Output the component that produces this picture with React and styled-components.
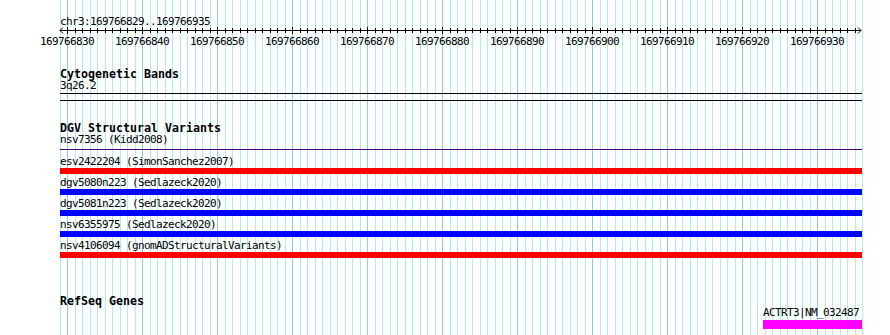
import styled, { createGlobalStyle } from "styled-components";

const START = 169766829;
const BP = 7.5;
const LEFT = 60;
const SPAN = 107;
const MONO = '"DejaVu Sans Mono", "Liberation Mono", monospace';

const GlobalStyle = createGlobalStyle`
  html, body {
    margin: 0;
    padding: 0;
    background: #ffffff;
  }
`;

const Panel = styled.div`
  position: relative;
  width: 890px;
  height: 335px;
  overflow: hidden;
  background: #ffffff;
  color: #000000;
  font-family: ${MONO};
`;

const GridLayer = styled.svg`
  position: absolute;
  left: 0;
  top: 0;
  z-index: 0;
`;

const Tracks = styled.div`
  position: relative;
  z-index: 1;
  display: flex;
  flex-direction: column;
  width: 802px;
  margin-left: ${LEFT}px;
  padding-top: 16px;
`;

const Caption = styled.div`
  font-size: 11px;
  letter-spacing: -0.62px;
  line-height: 12px;
  height: 12px;
  white-space: pre;
  margin-top: ${(p) => p.$top || 0}px;
  margin-left: ${(p) => p.$left || 0}px;
`;

const TrackTitle = styled.div`
  font-size: 11.63px;
  font-weight: bold;
  line-height: 12px;
  height: 12px;
  white-space: pre;
  margin-top: ${(p) => p.$top || 0}px;
`;

const Rule = styled.div`
  height: 1px;
  width: 802px;
  background: ${(p) => p.$color || "#000000"};
  margin-top: ${(p) => p.$top || 0}px;
`;

const Bar = styled.div`
  height: ${(p) => p.$height || 6}px;
  width: ${(p) => p.$width || 802}px;
  margin-top: ${(p) => p.$top || 0}px;
  margin-left: ${(p) => p.$left || 0}px;
  background: ${(p) => p.$color};
`;

const RulerSvg = styled.svg`
  display: block;
  overflow: visible;
`;

const px = (i) => Math.floor(LEFT + BP * i);

const Grid = () => {
  const lines = [];
  for (let i = 0; i <= SPAN; i++) {
    const major = (i - 1) % 10 === 0;
    const x = px(i) + 0.5;
    lines.push(
      <line
        key={i}
        x1={x}
        x2={x}
        y1={0}
        y2={335}
        stroke={major ? "#87cefa" : "#afeeee"}
        strokeWidth={1}
      />
    );
  }
  return (
    <GridLayer width={890} height={335}>
      {lines}
    </GridLayer>
  );
};

const Ruler = () => {
  const ticks = [];
  const labels = [];
  for (let i = 1; i < SPAN; i++) {
    const major = (i - 1) % 10 === 0;
    const x = px(i) - LEFT + 0.5;
    ticks.push(
      <line
        key={i}
        x1={x}
        x2={x}
        y1={major ? -1 : 0}
        y2={major ? 6 : 5}
        stroke="#000"
        strokeWidth={1}
      />
    );
    if (major) {
      labels.push(
        <text
          key={"l" + i}
          x={px(i) - LEFT}
          y={17}
          textAnchor="middle"
          fontSize="11"
          letterSpacing="-0.62"
          fontFamily={MONO}
        >
          {START + i}
        </text>
      );
    }
  }
  return (
    <RulerSvg width={802} height={20}>
      <line x1={0} x2={801} y1={2.5} y2={2.5} stroke="#000" />
      <polyline points="3,-0.5 0,2.5 3,5.5" fill="none" stroke="#000" />
      <polyline points="798,-0.5 801,2.5 798,5.5" fill="none" stroke="#000" />
      {ticks}
      {labels}
    </RulerSvg>
  );
};

const variants = [
  { name: "esv2422204 (SimonSanchez2007)", color: "#ff0000" },
  { name: "dgv5080n223 (Sedlazeck2020)", color: "#0000ff" },
  { name: "dgv5081n223 (Sedlazeck2020)", color: "#0000ff" },
  { name: "nsv6355975 (Sedlazeck2020)", color: "#0000ff" },
  { name: "nsv4106094 (gnomADStructuralVariants)", color: "#ff0000" },
];

const App = () => {
  return (
    <>
      <GlobalStyle />
      <Panel>
        <Grid />
        <Tracks>
          <Caption>chr3:169766829..169766935</Caption>
          <Ruler />

          <TrackTitle $top={20}>Cytogenetic Bands</TrackTitle>
          <Caption>3q26.2</Caption>
          <Rule $top={1} />
          <Rule $top={6} />

          <TrackTitle $top={21}>DGV Structural Variants</TrackTitle>
          <Caption>nsv7356 (Kidd2008)</Caption>
          <Rule $top={3} $color="#400080" />
          {variants.map((v, i) => (
            <div key={v.name}>
              <Caption $top={i === 0 ? 6 : 3}>{v.name}</Caption>
              <Bar $color={v.color} />
            </div>
          ))}

          <TrackTitle $top={37}>RefSeq Genes</TrackTitle>
          <Caption $left={703}>ACTRT3|NM_032487</Caption>
          <Bar $color="#ff00ff" $height={9} $width={99} $top={1} $left={703} />
        </Tracks>
      </Panel>
    </>
  );
};

export default App;
